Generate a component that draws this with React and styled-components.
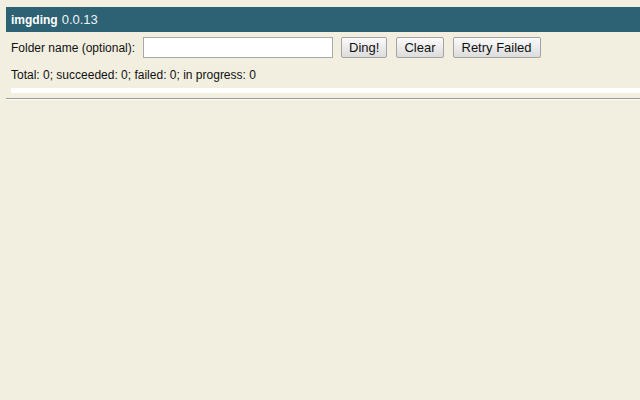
import React, { useState } from "react";
import { styled, createGlobalStyle } from "styled-components";

const GlobalStyle = createGlobalStyle`
  html, body {
    background-color: #f2efe0;
  }
  body {
    margin: 7px 0 0 6px;
    font-family: "Liberation Sans", Arial, sans-serif;
    color: #111;
    overflow: hidden;
  }
`;

const Header = styled.div`
  display: flex;
  align-items: center;
  height: 25px;
  padding: 0 5px;
  background-color: #2d6174;
  color: #fff;
  font-size: 13px;
`;

const AppName = styled.span`
  font-weight: bold;
  font-size: 12px;
  margin-right: 4px;
`;

const Version = styled.span`
  color: #f0f3f4;
`;

const Controls = styled.div`
  display: flex;
  align-items: center;
  height: 21px;
  margin-top: 5px;
  padding-left: 5px;
`;

const FieldLabel = styled.label`
  font-size: 12px;
  margin-right: 8px;
`;

const FolderField = styled.input`
  box-sizing: border-box;
  width: 190px;
  height: 21px;
  margin: 0 8px 0 0;
  border: 1px solid #a9a9a9;
  background: #fff;
  font-family: inherit;
  font-size: 13px;
`;

const Button = styled.button`
  box-sizing: border-box;
  height: 21px;
  margin-right: ${(props) => props.$gap || 8}px;
  padding: 0 ${(props) => props.$pad || 7}px;
  border: 1px solid #a3a3a3;
  border-radius: 2px;
  background: linear-gradient(#fbfbfb, #dcdcdc);
  color: #111;
  font-family: inherit;
  font-size: 13px;
  line-height: 19px;
  cursor: pointer;
`;

const Status = styled.div`
  font-size: 12px;
  margin-top: 9px;
  padding-left: 5px;
  line-height: 16px;
`;

const Progress = styled.div`
  height: 5px;
  margin: 5px 0 0 5px;
  background-color: #fff;
`;

const Divider = styled.hr`
  margin: 5px 0 0;
  border: none;
  border-top: 1px solid #9a9a9a;
  border-bottom: 1px solid #fbfaf5;
`;

export default function App() {
  const [folder, setFolder] = useState("");
  const counts = { total: 0, succeeded: 0, failed: 0, inProgress: 0 };

  return (
    <>
      <GlobalStyle />
      <Header>
        <AppName>imgding</AppName>
        <Version>0.0.13</Version>
      </Header>
      <Controls>
        <FieldLabel htmlFor="folder">Folder name (optional):</FieldLabel>
        <FolderField
          id="folder"
          value={folder}
          onChange={(e) => setFolder(e.target.value)}
        />
        <Button $gap={9}>Ding!</Button>
        <Button $gap={9}>Clear</Button>
        <Button $pad={8}>Retry Failed</Button>
      </Controls>
      <Status>
        Total: {counts.total}; succeeded: {counts.succeeded}; failed:{" "}
        {counts.failed}; in progress: {counts.inProgress}
      </Status>
      <Progress />
      <Divider />
    </>
  );
}
